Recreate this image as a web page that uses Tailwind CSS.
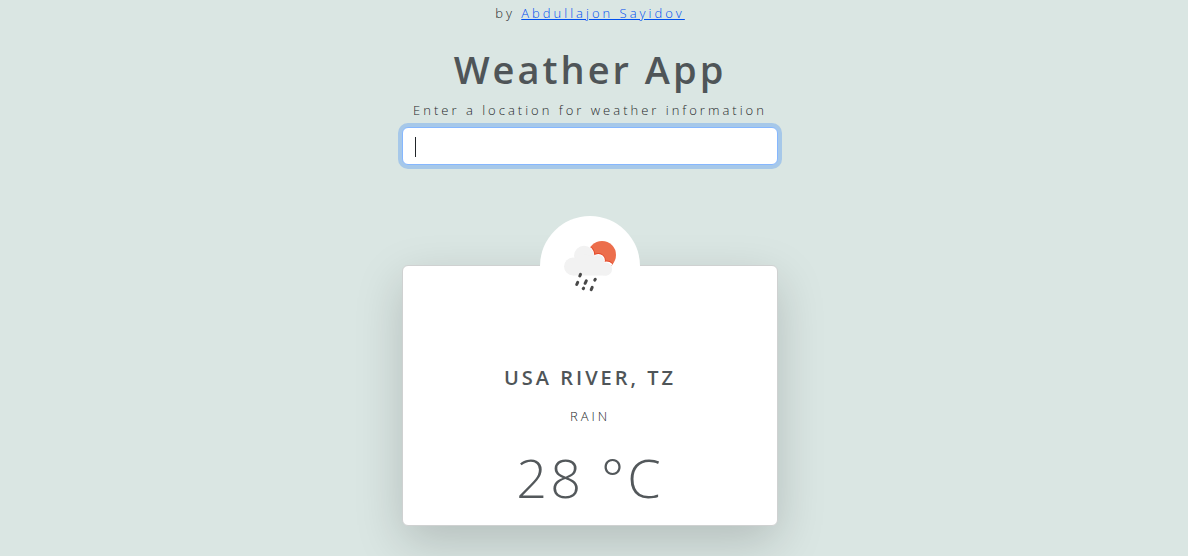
<!DOCTYPE html>
<html lang="en">
<head>
<meta charset="utf-8">
<meta name="viewport" content="width=device-width, initial-scale=1">
<title>Weather App</title>
<script src="https://cdn.jsdelivr.net/npm/@tailwindcss/browser@4"></script>
</head>
<body class="min-h-screen overflow-hidden bg-[#dae6e3] pr-2 font-['Open_Sans','Noto_Sans',sans-serif] text-[13px] leading-5 font-light tracking-[3px] text-[#26292b]">
<main class="mx-auto flex w-full max-w-[376px] flex-col pt-[3px] text-center">
  <p>by <a href="#" class="text-[#0050f0] underline">Abdullajon Sayidov</a></p>
  <h1 class="mt-[22px] text-[38px] leading-12 font-semibold whitespace-nowrap text-[#4f5558]">Weather App</h1>
  <label for="location" class="mt-[7px] whitespace-nowrap">Enter a location for weather information</label>
  <div class="relative mt-[7px]">
    <input id="location" type="text" class="block h-[38px] w-full rounded-md border border-[#86b7fe] bg-white px-3 text-base caret-transparent ring-4 ring-[#0d6efd]/25 outline-none">
    <span class="absolute top-2.5 left-[13px] h-5 w-px bg-[#212529]"></span>
  </div>
  <section class="relative mt-[100px] rounded-md border border-[#cfd1d1] bg-white px-4 pt-[98px] pb-2 shadow-[0_16px_48px_rgba(0,0,0,0.175)]">
    <div class="absolute -top-[50px] left-1/2 size-[100px] -translate-x-1/2 rounded-full bg-white">
      <svg class="size-full" viewBox="0 0 100 100" role="img" aria-label="Rain">
        <defs><clipPath id="sun"><circle cx="62" cy="39" r="14"/></clipPath></defs>
        <circle cx="62" cy="39" r="14" fill="#ec6e4c"/>
        <g clip-path="url(#sun)">
          <g fill="#e4492a"><circle cx="44" cy="39.500" r="11.300"/><circle cx="58.300" cy="44.300" r="7.300"/><circle cx="66.500" cy="53" r="8.400"/></g>
          <g fill="#fff"><circle cx="44" cy="39.500" r="10.500"/><circle cx="58.300" cy="44.500" r="6.600"/><circle cx="66.500" cy="53.200" r="7.800"/><path d="M44 42H60L68 50V60H44Z"/></g>
        </g>
        <g fill="#f2f2f2">
          <circle cx="33" cy="50.500" r="9"/><circle cx="44" cy="39.700" r="10"/><circle cx="58" cy="45" r="6"/><circle cx="65.500" cy="53" r="6.600"/>
          <path d="M33 43L44 38L58 42L64 46L67 50V59.500H33Z"/>
        </g>
        <g stroke="#484848" stroke-width="3" stroke-linecap="round">
          <path d="M40.500 58.400l-.7 1.600M37.700 66.300l-1 2.200M46.300 64.800l-1.200 2.500M55.300 63.200l-.5.900M43.600 72.200l-.4.500M52.200 71.400l-1 2.200"/>
        </g>
      </svg>
    </div>
    <h2 class="text-[20px] leading-7 font-semibold text-[#4f5558] uppercase">Usa River, TZ</h2>
    <p class="mt-[14px] uppercase">Rain</p>
    <p class="mt-[11px] text-[54px] leading-[80px] text-[#53585b]">28 °C</p>
  </section>
</main>
</body>
</html>
